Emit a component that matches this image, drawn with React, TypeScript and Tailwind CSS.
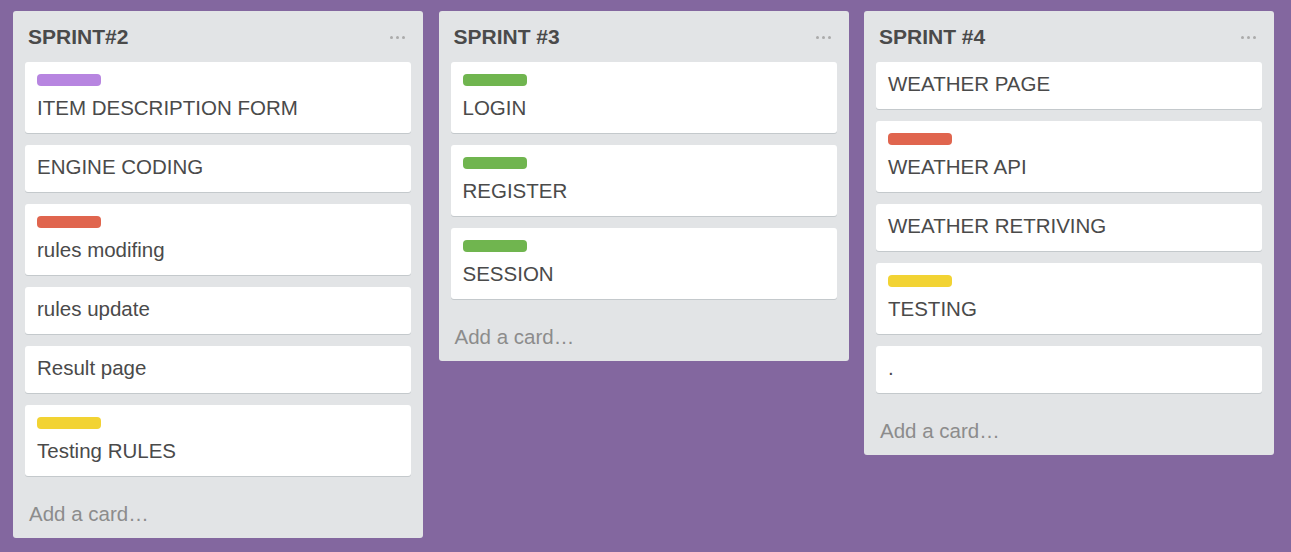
import React from 'react';

type Card = { title: string; label?: 'purple' | 'green' | 'red' | 'yellow' };
type List = { name: string; cards: Card[] };

const labelColors: Record<NonNullable<Card['label']>, string> = {
  purple: 'bg-[#b785e0]',
  green: 'bg-[#70b54f]',
  red: 'bg-[#e0654e]',
  yellow: 'bg-[#f2d333]',
};

const lists: List[] = [
  {
    name: 'SPRINT#2',
    cards: [
      { title: 'ITEM DESCRIPTION FORM', label: 'purple' },
      { title: 'ENGINE CODING' },
      { title: 'rules modifing', label: 'red' },
      { title: 'rules update' },
      { title: 'Result page' },
      { title: 'Testing RULES', label: 'yellow' },
    ],
  },
  {
    name: 'SPRINT #3',
    cards: [
      { title: 'LOGIN', label: 'green' },
      { title: 'REGISTER', label: 'green' },
      { title: 'SESSION', label: 'green' },
    ],
  },
  {
    name: 'SPRINT #4',
    cards: [
      { title: 'WEATHER PAGE' },
      { title: 'WEATHER API', label: 'red' },
      { title: 'WEATHER RETRIVING' },
      { title: 'TESTING', label: 'yellow' },
      { title: '.' },
    ],
  },
];

function ListCard({ card }: { card: Card }) {
  return (
    <div className="mb-[12px] rounded-[3px] bg-white px-[12px] pt-[10px] pb-[13px] shadow-[0_1px_0_#c4c9cc]">
      {card.label && (
        <div className={`mt-[2px] mb-[10px] h-[12px] w-[64px] rounded-[4px] ${labelColors[card.label]}`} />
      )}
      <div className="text-[20.5px] leading-[24px] text-[#4a4a4a]">{card.title}</div>
    </div>
  );
}

function SprintList({ list }: { list: List }) {
  return (
    <div className="w-[410px] shrink-0 rounded-[3px] bg-[#e2e4e6] px-[12px]">
      <div className="flex items-center justify-between pt-[14px] pb-[13px] pl-[3px] pr-[6px]">
        <h2 className="text-[21px] font-bold leading-[24px] text-[#4a4a4a]">{list.name}</h2>
        {/* list menu */}
        <div className="flex gap-[3px]">
          <span className="h-[3px] w-[3px] rounded-full bg-[#ababab]" />
          <span className="h-[3px] w-[3px] rounded-full bg-[#ababab]" />
          <span className="h-[3px] w-[3px] rounded-full bg-[#ababab]" />
        </div>
      </div>
      {list.cards.map((c, i) => (
        <ListCard key={i} card={c} />
      ))}
      <div className="pt-[14px] pb-[12px] pl-[4px] text-[20.5px] leading-[24px] text-[#8c8c8c]">Add a card…</div>
    </div>
  );
}

export default function App() {
  return (
    <div className="min-h-screen bg-[#83679f] font-['Liberation_Sans',Arial,sans-serif]">
      <div className="flex items-start gap-[15.5px] px-[13px] pt-[11px]">
        {lists.map((l) => (
          <SprintList key={l.name} list={l} />
        ))}
      </div>
    </div>
  );
}
